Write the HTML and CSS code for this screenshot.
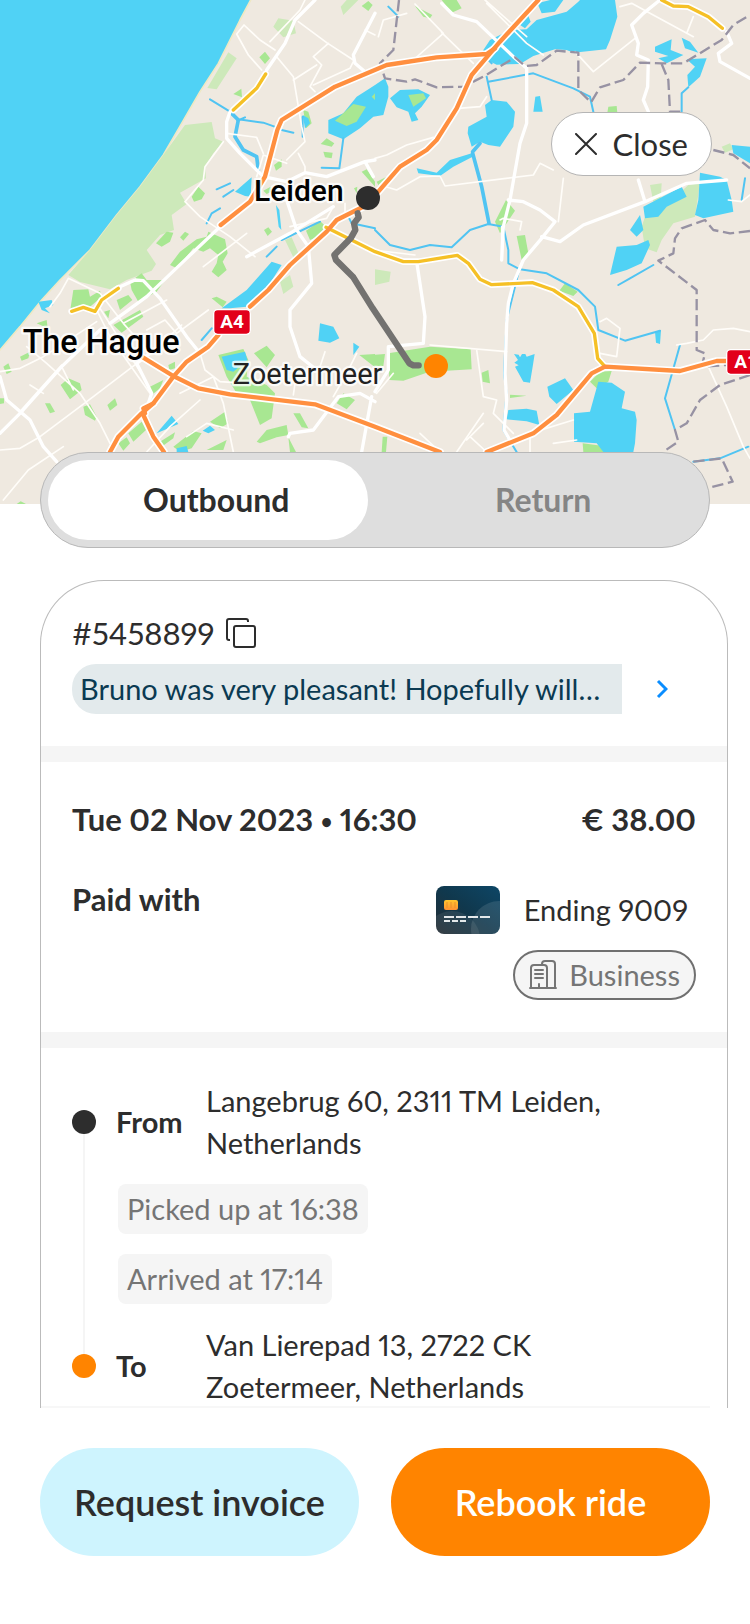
FILE: index.html
```html
<!DOCTYPE html>
<html lang="en">
<head>
<meta charset="utf-8">
<meta name="viewport" content="width=device-width, initial-scale=1">
<title>Ride details</title>
<link rel="stylesheet" href="styles.css">
</head>
<body>
<header class="hero">
  <svg class="map" viewBox="0 0 2250 1512" role="img" aria-label="Route from Leiden to Zoetermeer">
    <defs>
      <path id="m1" d="M1615 0L1500 125 1415 225 1370 325 1310 420 1280 450 1200 500 1100 615 1010 660 980 695 870 795 805 870 750 920M655 1005L625 1040 560 1085 520 1130 460 1210 425 1240 355 1310 330 1356"/>
      <path id="m2" d="M1485 145L1460 162 1310 172 1160 195 1005 260 845 360 832 390 795 530 750 605 662 675M425 1070L520 1128 595 1165 690 1183 945 1213 1125 1280 1320 1356M1460 1356L1600 1300 1670 1245 1775 1120 1815 1100 2040 1113 2150 1083H2185M435 1240L430 1225 460 1210M430 1245L460 1310 492 1356"/>
      <path id="y1" d="M797 222L770 265 700 330M215 934L250 922 285 934 305 900 355 865M978 682L1125 755 1210 785 1255 785 1372 766 1405 790 1440 838 1475 854 1597 848 1660 870 1735 920 1783 1000 1793 1075 1815 1100M1985 0L2020 18 2065 20 2125 50 2167 85"/>
    </defs>
    <rect class="land" width="2250" height="1512"/>
    <path class="water" d="M0 0H752L720 60 655 190 600 275 545 370 490 465 420 560 350 645 270 750 180 840 125 900 60 980 0 1050Z"/>
    <path class="beach" d="M752 0L720 60 655 190 600 275 545 370 490 465 420 560 350 645 270 750 180 840 125 900 60 980 0 1050"/>

    <!-- dunes and pale parks -->
    <g class="dune">
      <path d="M555 375L635 366 645 415 670 425 640 460 615 500 618 535 540 578 560 612 515 645 522 690 480 705 440 750 468 792 455 812 380 840 330 868 240 846 205 825 270 750 350 645 420 560 490 465Z"/>
      <path d="M685 157L710 175 650 268 622 264ZM820 80L835 55 880 62 888 100 850 112ZM1022 20L1040 0H1075L1030 45ZM855 720L875 712 900 770 880 772ZM840 845L870 825 880 860 850 882Z"/>
      <path d="M1125 808L1172 815 1168 845 1125 855ZM1950 555L1985 550 1982 600 1960 605ZM1935 650L2010 605 2065 555 2100 550 2085 650 2020 670 1985 720 1970 757 1935 745 1925 680ZM2165 440L2190 430 2200 448 2175 458Z"/>
    </g>
    <g class="park">
      <path d="M778 172L795 155 810 175 795 192ZM700 282L724 266 726 292ZM910 330L925 335 935 370 918 385ZM962 432L980 415 1003 430 995 440ZM970 455L998 458 995 475 975 472ZM822 495L845 478 845 500 828 512ZM1085 515L1100 508 1125 545V560ZM575 590L595 560 615 580 605 598 582 605ZM792 690L805 682 816 695 803 708ZM918 692L960 663 978 680 965 705 930 720ZM790 572L812 560 814 575 800 582ZM1085 18L1105 3 1118 15 1105 33Z"/>
      <path d="M468 730L500 695 520 698 510 725 485 740ZM540 712L555 695 567 702 550 722ZM590 718L620 710 625 695 675 718 683 760 668 785 680 810 655 832 635 815 650 790 655 765 630 745 610 755 580 745 530 805 510 795 540 755Z"/>
      <path d="M1245 18L1270 50 1290 55 1297 45ZM1325 0H1370L1385 25 1355 38ZM1070 580L1062 565 1072 560ZM1130 545L1160 530 1135 555ZM1485 665L1518 600 1545 632 1500 700ZM1550 708L1575 705 1585 760 1565 780ZM1825 320L1850 318 1852 338H1822Z"/>
      <path d="M220 870L265 868 270 890 300 872 305 890 265 925 210 935ZM350 900L385 885 397 900 360 930ZM390 845L425 820 440 840 495 840 470 875 415 905 395 870ZM340 975L420 930 430 950 365 998ZM312 935L330 930 325 955ZM635 895L650 890 680 905 668 922ZM110 970L140 960 143 985ZM60 1070L90 1055 85 1075 65 1082ZM10 1100L25 1090 35 1115 20 1122ZM182 1155L205 1135 240 1150 245 1170 210 1198ZM135 1210L150 1210 165 1235 150 1240ZM250 1220L270 1213 290 1250 285 1262 255 1245ZM322 1215L345 1195 352 1215 330 1232ZM0 1195H12V1210L0 1212Z"/>
      <path d="M655 1065L730 1047 745 1080 740 1130 800 1155 825 1180 815 1255 780 1275 750 1200 710 1180 680 1130ZM762 1060L800 1037 825 1065 800 1102ZM450 1160L490 1140 480 1165 455 1185ZM505 1095L525 1085 525 1105 508 1110ZM355 1330L380 1312 390 1330 370 1352ZM385 1300L425 1265 438 1290 400 1325ZM480 1325L525 1297 520 1315 485 1340ZM520 1340L580 1293 605 1300 575 1345 540 1355ZM630 1265L675 1235 685 1270 660 1285ZM620 1350L680 1320 670 1350ZM770 1325L800 1290 860 1275 865 1305 830 1312 780 1330ZM880 1240L900 1240 925 1285 905 1282ZM865 1312L888 1356H870ZM1010 1210L1030 1180 1065 1200 1040 1228ZM1078 1065L1125 1062V1102ZM1125 1064L1155 1062 1150 1098H1125ZM50 1512L62 1504 78 1512Z"/>
      <path d="M1165 1060L1290 1040 1412 1048 1415 1108 1340 1112 1280 1118 1210 1142 1168 1140ZM1445 1118L1465 1110 1470 1150 1448 1145ZM1530 1184L1580 1187 1530 1194ZM1678 872L1695 850 1733 875 1720 888ZM1770 1145L1800 1115 1835 1113 1825 1145 1790 1165ZM1748 1330L1810 1338 1815 1356H1750ZM1560 750H1580L1575 778ZM1148 1310H1162L1158 1356H1145Z"/>
    </g>

    <!-- lakes and canals -->
    <g class="water">
      <path d="M908 345L925 355 930 370 915 385ZM985 360L1030 340 1070 290 1110 265 1125 255 1155 235 1165 260 1165 290 1150 345 1120 350 1080 385 1030 418 985 400ZM705 575L755 532 752 590 735 588ZM828 615L838 630 844 690 836 680Z"/>
      <path d="M1460 180L1450 190 1440 165 1470 120 1530 90 1580 88 1610 60 1700 35 1735 5 1740 0H1845L1852 50 1830 120 1818 148 1720 158 1700 150 1665 148 1600 168 1560 192 1490 194ZM1552 70L1578 30 1592 65 1575 85ZM1612 10L1650 0H1690L1665 35 1625 40Z" fill-rule="nonzero"/>
      <path d="M1170 295L1200 270 1255 268 1290 285 1265 320 1245 340 1255 360 1235 365 1225 335 1190 322ZM1475 300L1520 305 1545 335 1540 380 1520 410 1500 440 1465 435 1440 425 1415 440 1403 400 1405 380 1460 350 1455 315ZM1250 505L1310 518 1350 480 1415 460 1418 470 1360 500 1320 528 1255 520ZM1606 290L1620 288 1628 335H1600Z"/>
      <path d="M1965 140L2015 118 2012 150 2050 165 2000 190 1975 175 2005 168 1965 155ZM2045 113L2070 125 2095 158 2055 145ZM2060 178L2120 175 2100 230 2065 262 2062 225 2085 200ZM2100 518L2160 530 2180 540 2195 600 2200 635 2110 655 2085 645 2095 600ZM1930 620L2045 560 2060 590 2000 620 1975 650 1935 655ZM1890 690L1920 645 1930 690 1910 710ZM1850 740L1910 735 1945 720 1950 735 1925 790 1880 810 1830 825ZM2195 435L2250 440V490L2200 460Z"/>
      <path d="M115 905L155 900 160 915 135 925 150 940 125 930ZM665 925L740 870 815 785 845 795 810 850 740 920 690 925ZM960 970L1000 980 1018 1015 990 1028 955 1022ZM1060 1028L1078 1040 1060 1065ZM665 1070L735 1055 742 1080 700 1115 680 1110ZM470 1300L515 1247 535 1272ZM608 1292L630 1277 645 1290 625 1300ZM530 1345L560 1338 565 1356H530Z"/>
      <path d="M1542 1062L1556 1064 1560 1072 1566 1062 1576 1062 1580 1070 1604 1062 1598 1100 1590 1148 1570 1145 1545 1100 1556 1096 1543 1088 1554 1080ZM1642 1160L1695 1135 1720 1170 1670 1212 1648 1190ZM1525 1230L1580 1226 1610 1232 1618 1275 1580 1264 1520 1258ZM1722 1240L1770 1235 1795 1145 1835 1148 1875 1175 1865 1225 1905 1235 1910 1260 1905 1330 1900 1356H1810L1790 1330 1722 1325ZM1965 995L1983 990 1980 1032 1968 1028Z"/>
    </g>
    <g class="islet">
      <path d="M1005 362L1060 312 1098 320 1070 365 1040 378ZM1115 290L1125 280V300ZM1225 285L1270 280 1278 295 1240 320Z"/>
    </g>
    <g class="canal">
      <path d="M630 298L690 335 715 358 790 368 830 382M845 390L880 398M715 360L705 410 730 450 770 470 775 510M735 352L712 362M908 350V410M1030 415L1018 505 965 503"/>
      <path d="M670 590L700 570M650 568L690 550M620 670L635 640 660 625M845 720L960 665M800 770L830 740M1045 650L1055 670 1125 685M605 1020L635 985"/>
      <path d="M1125 690L1170 735 1230 750 1290 735 1355 742 1410 690 1465 672 1510 680 1525 750V790L1560 808M1460 230L1475 300M1465 245L1600 220 1720 265 1770 290 1780 335M1450 165L1475 190M2065 262L2045 280V335M2235 535L2225 600"/>
      <path d="M1560 808L1640 820 1735 870 1785 920 1795 990 1875 1022 1980 992M1555 820L1520 960 1512 1120 1520 1180 1510 1290 1550 1356M2040 1035L1995 1195 2025 1290M1855 855L1890 835 1960 795M2080 1385L2160 1375 2245 1340M1165 20L1195 50"/>
      <path class="canal-wide" d="M1418 460L1445 560 1467 670M1418 455L1440 430M695 340L715 360 705 410 730 450 770 470 775 510"/>
    </g>

    <!-- local streets -->
    <g class="street">
      <path d="M710 102L732 75 780 120 825 150M710 102L745 165 785 210M915 0L900 30 810 125M830 170L880 230 895 320 905 380 915 425 860 480M895 65L980 128 1060 180M985 130L940 170 965 195 930 260 945 275M880 240L950 195M940 255L1050 205 1060 185M1095 90L1125 105M680 400L770 412 790 460M555 605L610 540 615 500 670 425M555 605L600 650 690 710 765 770M895 460L915 500V520M1000 620L980 655 870 680M860 490L790 465 770 530M1035 610V650"/>
      <path d="M1125 475L1160 465 1220 435 1300 412M1140 555L1190 570 1260 530 1320 528 1335 558 1600 525 1620 490 1660 510M1245 12L1330 100 1240 180M1325 98L1420 190M1460 10L1580 130 1630 165M1135 110L1150 60 1220 40M1455 0L1580 110M1860 20L1895 10 1950 40 2080 110M2060 100L2080 50M1725 155L1780 215 1905 115M1375 325L1440 320 1460 290M1690 535L1675 665M1500 660L1510 655 1565 665 1560 690M1505 680V775M2185 600L2225 605 2250 585M1120 750L1245 765"/>
      <path d="M205 835L180 880 150 920M205 835L300 880 370 970 450 1060M290 930L330 1010 450 1180M370 970L500 900M300 925L430 1130M0 1115L60 1105 130 1070 290 965M80 1040L140 1090 240 1180 300 1270 330 1330M0 1350L60 1345 120 1310 280 1190 450 1060M185 1100L220 1170M90 1155L130 1180M60 1235L185 1095M10 1500L85 1410 190 1340M610 800L740 700M440 990L495 960 530 1000 625 930M545 990L600 1060 615 1110 660 1145 740 1150M540 1180L640 1130 670 1210 700 1356M450 1060L545 975M440 1356L510 1280 600 1200M560 1310L620 1270 700 1290M880 1185L885 1150M975 1055L960 1100M1070 1060L1040 1120 1000 1190"/>
      <path d="M1430 1050L1450 1190 1490 1200 1480 1240 1540 1300M1290 1035L1520 1055M1450 1240L1370 1356M1410 1310L1460 1356M1590 1356V1300L1720 1260M1660 1330L1730 1320M1800 965L1820 955 1860 985 1850 1070 1800 1060M2030 1035L2060 1030 2110 1020 2140 990 2200 985 2250 995M2125 1100L2180 1220 2230 1340 2250 1375M1260 1300L1320 1356M1450 1270L1400 1320M1180 1120L1130 1180"/>
    </g>
    <g class="road">
      <path d="M945 0L885 60 855 130 800 210M1125 40L1060 165 1065 190 1095 215M690 335L680 365V415L720 460 790 530 860 545 915 518 980 530 1095 485 1125 480M1095 485L1120 530M860 600L890 690 925 740 935 850 870 930 870 980 900 1070 950 1110M660 680L560 775 440 890 330 970M405 840L430 842 480 895 560 1010 600 1060M740 770L870 700 1000 620M405 840L350 865M0 1300L60 1240 185 1100 300 990M0 1130L20 1200 90 1260 130 1340 170 1385M450 1060L410 1090 455 1180 445 1210M865 1310L870 1300 940 1290 1015 1190 1080 1180 1125 1205M1115 1190L1085 1356"/>
      <path d="M1325 10L1360 45 1430 65 1540 170 1580 205 1580 370 1560 430 1530 600 1510 680 1505 780M1525 600L1570 605 1620 630 1665 665 1625 715 1570 780 1540 850 1525 910 1520 970 1515 1120 1520 1200 1512 1290 1535 1330M1625 710L1680 725 1750 675 1935 605 1915 540M1980 0L1930 40 1895 75 1915 130 1910 165 1945 180 1943 260 1930 300 1945 335M2180 95L2195 130 2155 160 2160 185 2250 235M1935 605L2060 550 2180 540M1125 1175L1165 1110V1040L1270 1030 1275 950 1250 785"/>
    </g>

    <!-- province borders -->
    <g class="border">
      <path d="M1197 0L1180 150 1140 190 1155 235 1220 245 1245 238 1310 262 1390 260 1450 230 1545 172 1575 198 1610 195 1670 152 1735 158V270L1773 307 1800 262 1870 240 1920 188 1985 190 2050 190 2165 120 2200 75 2250 45"/>
      <path d="M1985 192L2005 240 2010 335 2045 335M2140 450L2200 465 2250 505M2250 693L2190 700 2140 690 2115 660 2045 685 2025 715 2020 760 1975 782 2090 870V1050L2115 1060 2105 1100 2180 1095M2250 1125L2160 1155 2100 1200 2060 1270 2025 1290 2035 1325 1995 1352M2080 1385L2165 1375 2198 1445 2120 1465"/>
    </g>

    <!-- main roads: casing below, colour on top -->
    <use class="yellow-casing" href="#y1"/>
    <g class="casing"><use href="#m1"/><use href="#m2"/></g>
    <use class="yellow" href="#y1"/>
    <g class="motorway"><use href="#m1"/><use href="#m2"/></g>

    <path class="route" d="M1073 640L1076 652 1062 670 1066 690 1052 715 1003 765 1008 780 1060 832 1118 925 1228 1090 1240 1096H1256"/>
    <circle class="pin-start" cx="1104" cy="594" r="36"/>
    <circle class="pin-end" cx="1308" cy="1098" r="36"/>

    <rect class="shield" x="641" y="929" width="110" height="74" rx="12"/>
    <text class="shield-text" x="696" y="984" text-anchor="middle">A4</text>
    <rect class="shield" x="2180" y="1049" width="110" height="74" rx="12"/>
    <text class="shield-text" x="2203" y="1104">A12</text>
    <text class="city" x="762" y="603">Leiden</text>
    <text class="city city-large" x="68" y="1058">The Hague</text>
    <text class="city town" x="698" y="1153">Zoetermeer</text>
  </svg>
  <button class="close" type="button">
    <svg class="close-icon" viewBox="0 0 22 22" aria-hidden="true"><path d="M1 1L21 21M21 1L1 21"/></svg>
    Close
  </button>
</header>

<main class="content">
  <nav class="tabs" role="tablist">
    <button class="tab tab-active" type="button" role="tab" aria-selected="true">Outbound</button>
    <button class="tab" type="button" role="tab" aria-selected="false">Return</button>
  </nav>

  <article class="card">
    <section class="summary">
      <div class="reference">
        <span>#5458899</span>
        <button class="icon-button" type="button" aria-label="Copy booking number">
          <svg class="copy-icon" viewBox="0 0 30 30" aria-hidden="true"><rect x="8" y="8" width="21" height="21" rx="2"/><path d="M22 4V3Q22 1 20 1H3Q1 1 1 3V20Q1 22 3 22H4"/></svg>
        </button>
      </div>
      <div class="review">
        <p class="review-text">Bruno was very pleasant! Hopefully will…</p>
        <button class="icon-button" type="button" aria-label="Open review">
          <svg class="chevron" viewBox="0 0 12 20" aria-hidden="true"><path d="M2 2L10 10 2 18"/></svg>
        </button>
      </div>
    </section>

    <section class="payment">
      <div class="row">
        <h2 class="strong">Tue 02 Nov 2023 <span class="bullet">•</span> 16:30</h2>
        <span class="strong">€ 38.00</span>
      </div>
      <div class="row">
        <h2 class="strong">Paid with</h2>
        <div class="method">
          <div class="bank">
            <svg class="bank-card" viewBox="0 0 64 48" aria-hidden="true">
              <defs>
                <linearGradient id="face" x1="0" y1="1" x2="1" y2="0"><stop offset="0" stop-color="#252d34"/><stop offset=".5" stop-color="#10384d"/><stop offset="1" stop-color="#0d4666"/></linearGradient>
                <linearGradient id="chip" x1="0" y1="0" x2="0" y2="1"><stop offset="0" stop-color="#ffc62e"/><stop offset="1" stop-color="#ff9233"/></linearGradient>
                <clipPath id="edge"><rect width="64" height="48" rx="8"/></clipPath>
              </defs>
              <g clip-path="url(#edge)">
                <rect width="64" height="48" fill="url(#face)"/>
                <circle cx="63" cy="43" r="28" fill="#fff" opacity=".11"/>
                <circle cx="16" cy="53" r="28" fill="#fff" opacity=".08"/>
              </g>
              <rect x="8" y="14" width="14" height="10" rx="2" fill="url(#chip)"/>
              <path d="M11 16V22M15 16V22M19 16V22" stroke="#e8912a"/>
              <path d="M8 31H18M20 31H30M32 31H42M44 31H54M8 35H14M16 35H22M24 35H30" stroke="#e4e8ea" stroke-width="2"/>
            </svg>
            <span>Ending 9009</span>
          </div>
          <span class="badge">
            <svg class="building" viewBox="0 0 28 30" aria-hidden="true"><path d="M1 28H27M2 28V8Q2 5 5 5H15Q18 5 18 8V28M13 5V4Q13 1 16 1H23Q26 1 26 4V28M10 28V24M6 10H14M6 14H14M6 18H14"/></svg>
            Business
          </span>
        </div>
      </div>
    </section>

    <section class="trip">
      <div class="stop">
        <span class="dot"></span>
        <h3 class="stop-label">From</h3>
        <p class="address">Langebrug 60, 2311 TM Leiden, Netherlands</p>
      </div>
      <div class="times">
        <span class="time">Picked up at 16:38</span>
        <span class="time">Arrived at 17:14</span>
      </div>
      <div class="stop">
        <span class="dot dot-end"></span>
        <h3 class="stop-label">To</h3>
        <p class="address">Van Lierepad 13, 2722 CK Zoetermeer, Netherlands</p>
      </div>
    </section>
  </article>
</main>

<footer class="actions">
  <button class="action action-light" type="button">Request invoice</button>
  <button class="action action-main" type="button">Rebook ride</button>
</footer>
</body>
</html>
```
FILE: styles.css
```css
* {
  box-sizing: border-box;
}

body,
h2,
h3,
p {
  margin: 0;
}

body {
  background: #fff;
  color: #2d2d2d;
  font-family: Lato, "Noto Sans", sans-serif;
  font-size: 29px;
  font-weight: 400;
  font-variant-numeric: proportional-nums;
  line-height: 42px;
}

button {
  border: 0;
  padding: 0;
  background: none;
  color: inherit;
  font: inherit;
  cursor: pointer;
}

svg {
  display: block;
  flex: none;
}

/* Map */

.hero {
  position: relative;
}

.map {
  width: 100%;
  height: auto;
  stroke-linejoin: round;
  stroke-linecap: round;
}

.land { fill: #efe9e0; }
.water { fill: #50d2f5; }
.beach { fill: none; stroke: #eee9c4; stroke-width: 5; }
.dune { fill: #cde9ba; }
.park,
.islet { fill: #a8e792; }
.canal { fill: none; stroke: #50c4f2; stroke-width: 6; }
.canal-wide { stroke-width: 11; }
.street { fill: none; stroke: #fffdf9; stroke-width: 5; }
.road { fill: none; stroke: #fff; stroke-width: 10; }
.border { fill: none; stroke: #9792a3; stroke-width: 7; stroke-dasharray: 34 14; stroke-linecap: butt; }
.casing { fill: none; stroke: #fff; stroke-width: 23; }
.motorway { fill: none; stroke: #ff8f3f; stroke-width: 13; }
.yellow-casing { fill: none; stroke: #fff; stroke-width: 20; }
.yellow { fill: none; stroke: #f5c026; stroke-width: 10; }
.route { fill: none; stroke: #737270; stroke-width: 19; }
.pin-start { fill: #2d2d2d; }
.pin-end { fill: #ff8400; }
.shield { fill: #e2001a; stroke: #fff; stroke-width: 4; }

.shield-text {
  fill: #fff;
  font: 700 57px Roboto, sans-serif;
}

.city {
  fill: #000;
  stroke: #fffc;
  stroke-width: 14;
  stroke-linejoin: round;
  paint-order: stroke;
  font: 500 90px Roboto, sans-serif;
}

.city-large {
  font-size: 97px;
}

.town {
  fill: #222;
  font-size: 87px;
  font-weight: 400;
}

.close {
  position: absolute;
  top: 112px;
  right: 38px;
  display: flex;
  align-items: center;
  gap: 16px;
  height: 64px;
  padding: 0 23px;
  border: 1px solid #b5b5b5;
  border-radius: 32px;
  background: #fff;
  font-size: 31px;
}

.close-icon {
  width: 22px;
  fill: none;
  stroke: #2d2d2d;
  stroke-width: 2;
  stroke-linecap: round;
}

/* Direction switch */

.content {
  position: relative;
  margin-top: -52px;
  padding-left: 40px;
}

.tabs {
  display: flex;
  height: 96px;
  margin-right: 40px;
  padding: 7px;
  border: 1px solid #b8b8b8;
  border-radius: 48px;
  background: #dedede;
}

.tab {
  flex: 1;
  padding-left: 16px;
  border-radius: 40px;
  color: #858585;
  font-size: 32px;
  font-weight: 700;
}

.tab-active {
  flex: 0 0 49%;
  background: #fff;
  color: #2d2d2d;
}

/* Ride card */

.card {
  margin: 32px 22px 0 0;
  border: 1px solid #bbb;
  border-bottom: 0;
  border-radius: 64px 64px 0 0;
}

.summary {
  padding: 31px 31px 32px;
  border-bottom: 16px solid #f5f5f5;
}

.reference {
  display: flex;
  align-items: center;
  gap: 12px;
  padding-bottom: 10px;
  font-size: 31px;
}

.copy-icon {
  width: 30px;
  fill: none;
  stroke: #2d2d2d;
  stroke-width: 2;
}

.review {
  display: flex;
  align-items: center;
  gap: 34px;
}

.review-text {
  flex: 1;
  min-width: 0;
  max-width: 550px;
  padding: 4px 8px;
  border-radius: 24px 0 0 24px;
  background: #e3eaec;
  color: #0b3a52;
  white-space: nowrap;
  overflow: hidden;
  text-overflow: ellipsis;
}

.chevron {
  width: 12px;
  fill: none;
  stroke: #0a8dff;
  stroke-width: 3;
}

.payment {
  display: flex;
  flex-direction: column;
  gap: 38px;
  padding: 36px 31px 32px;
  border-bottom: 16px solid #f5f5f5;
}

.row {
  display: flex;
  justify-content: space-between;
}

.strong {
  font-size: 31px;
  font-weight: 700;
}

.bullet {
  font-size: 20px;
  vertical-align: 2px;
  line-height: 1;
}

.method {
  display: flex;
  flex-direction: column;
  align-items: flex-end;
  gap: 16px;
  padding-top: 8px;
}

.bank {
  display: flex;
  align-items: center;
  gap: 24px;
  height: 48px;
  padding-right: 8px;
}

.bank-card {
  width: 64px;
}

.badge {
  display: flex;
  align-items: center;
  gap: 12px;
  padding: 2px 14px;
  border: 2px solid #707070;
  border-radius: 25px;
  background: #f5f5f5;
  color: #757575;
}

.building {
  width: 28px;
  fill: none;
  stroke: #757575;
  stroke-width: 2;
  stroke-linecap: round;
}

.trip {
  padding: 32px 31px 0;
}

.stop {
  display: grid;
  grid-template-columns: 24px 70px 1fr;
  column-gap: 20px;
  align-items: center;
}

.dot {
  width: 24px;
  height: 24px;
  border-radius: 50%;
  background: #2d2d2d;
}

.dot-end {
  background: #ff8400;
}

.stop-label {
  font-size: 29px;
  font-weight: 700;
}

.address {
  max-width: 440px;
}

.times {
  position: relative;
  display: flex;
  flex-direction: column;
  align-items: flex-start;
  gap: 20px;
  padding: 20px 0 20px 46px;
}

.times::before {
  content: "";
  position: absolute;
  inset: -30px auto -30px 11px;
  width: 2px;
  background: #f5f5f5;
}

.time {
  padding: 4px 9px;
  border-radius: 8px;
  background: #f5f5f5;
  color: #757575;
}

/* Footer */

.actions {
  display: flex;
  gap: 32px;
  margin: -2px 40px 0;
  padding: 40px 0 68px;
  border-top: 2px solid #f7f7f7;
}

.action {
  flex: 1;
  height: 108px;
  border-radius: 54px;
  font-size: 36px;
  font-weight: 600;
}

.action-light {
  background: #cef4fe;
}

.action-main {
  background: #ff8400;
  color: #fff;
}
```
